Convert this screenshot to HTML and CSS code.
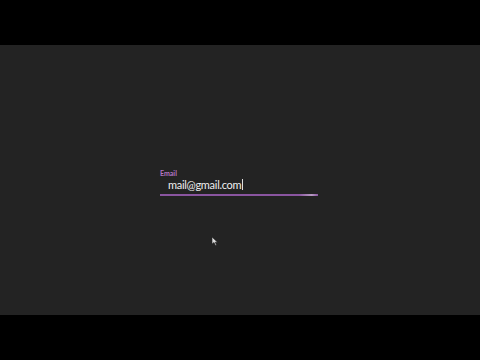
FILE: index.html
```html
<!DOCTYPE html>
<html>
<head>
<meta charset="utf-8">
<link rel="stylesheet" href="styles.css">
</head>
<body>
<div class="bar"></div>
<main class="stage">
  <div class="field">
    <label class="label">Email</label>
    <div class="input"><span class="value">mail@gmail.com</span><span class="caret"></span></div>
    <div class="line"></div>
  </div>
  <svg class="pointer" width="8" height="10" viewBox="0 0 8 10"><path d="M1 1 L1 8 L3 6.5 L4.5 9.5 L5.5 9 L4.2 6.2 L6.5 6.2 Z" fill="#ddd" stroke="#222" stroke-width="0.6"/></svg>
</main>
<div class="bar"></div>
</body>
</html>
```
FILE: styles.css
```css
html, body { margin: 0; padding: 0; background: #000; width: 480px; height: 360px; overflow: hidden; }
body { display: flex; flex-direction: column; font-family: "Lato", "Open Sans", sans-serif; }
.bar { height: 45px; background: #000; flex: none; }
.stage { height: 270px; flex: none; background: #232323; position: relative; box-sizing: border-box; padding: 124px 0 0 160px; }
.field { width: 158px; display: flex; flex-direction: column; }
.label { font-size: 7px; font-weight: 700; color: #b476c4; height: 8px; line-height: 8px; }
.input { display: flex; align-items: center; padding: 0 0 0 8px; height: 15px; color: #f0f0f0; font-size: 11px; letter-spacing: -0.3px; }
.value { line-height: 13px; }
.caret { width: 1px; height: 11px; background: #ddd; margin-left: 1px; }
.line { height: 2px; margin-top: 2px; background: linear-gradient(to right, #8a55a0 0%, #8a55a0 88%, #b79ac2 96%, #8a55a0 100%); }
.pointer { position: absolute; left: 211px; top: 191px; }
```
